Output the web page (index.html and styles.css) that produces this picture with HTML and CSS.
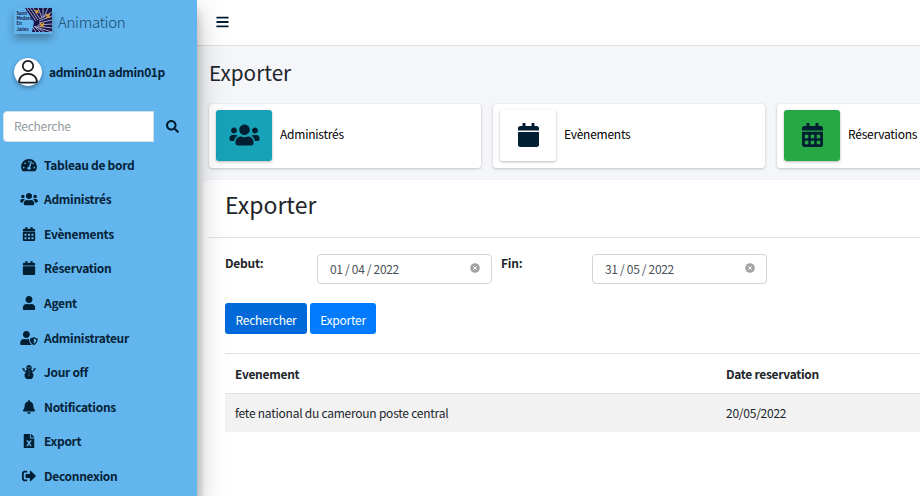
FILE: index.html
```html
<!DOCTYPE html>
<html lang="fr">
<head>
<meta charset="utf-8">
<title>Animation</title>
<link rel="stylesheet" href="styles.css">
</head>
<body>
<svg class="sprite" aria-hidden="true">
  <symbol id="bars" viewBox="0 0 448 512"><path d="M16 132h416c8.800 0 16-7.200 16-16V76c0-8.800-7.200-16-16-16H16C7.200 60 0 67.200 0 76v40c0 8.800 7.200 16 16 16zm0 160h416c8.800 0 16-7.200 16-16v-40c0-8.800-7.200-16-16-16H16c-8.800 0-16 7.200-16 16v40c0 8.800 7.200 16 16 16zm0 160h416c8.800 0 16-7.200 16-16v-40c0-8.800-7.200-16-16-16H16c-8.800 0-16 7.200-16 16v40c0 8.800 7.200 16 16 16z"/></symbol>
  <symbol id="search" viewBox="0 0 512 512"><path d="M505 442.700L405.300 343c-4.500-4.500-10.600-7-17-7H372c27.600-35.300 44-79.700 44-128C416 93.100 322.900 0 208 0S0 93.100 0 208s93.100 208 208 208c48.300 0 92.700-16.400 128-44v16.300c0 6.400 2.500 12.500 7 17l99.700 99.700c9.400 9.400 24.600 9.400 33.900 0l28.300-28.300c9.400-9.400 9.400-24.600.1-34zM208 336c-70.700 0-128-57.200-128-128 0-70.700 57.200-128 128-128 70.700 0 128 57.200 128 128 0 70.700-57.200 128-128 128z"/></symbol>
  <symbol id="tachometer" viewBox="0 0 576 512"><path d="M288 32C128.940 32 0 160.940 0 320c0 52.800 14.250 102.260 39.060 144.800 5.610 9.620 16.300 15.200 27.440 15.200h443c11.140 0 21.830-5.580 27.440-15.200C561.750 422.260 576 372.800 576 320c0-159.060-128.940-288-288-288zm0 64c14.710 0 26.580 10.130 30.320 23.650-1.110 2.260-2.640 4.230-3.450 6.670l-9.220 27.670c-5.130 3.490-10.970 6.010-17.640 6.010-17.670 0-32-14.330-32-32S270.330 96 288 96zM96 384c-17.670 0-32-14.330-32-32s14.330-32 32-32 32 14.330 32 32-14.330 32-32 32zm48-160c-17.670 0-32-14.330-32-32s14.330-32 32-32 32 14.330 32 32-14.330 32-32 32zm246.770-72.410l-61.330 184C343.130 347.330 352 364.540 352 384c0 11.720-3.380 22.550-8.880 32H232.880c-5.500-9.450-8.880-20.280-8.880-32 0-33.940 26.500-61.430 59.900-63.590l61.340-184.010c4.170-12.560 17.730-19.450 30.360-15.170 12.570 4.190 19.350 17.790 15.170 30.360zm14.660 57.200l15.520-46.550c3.470-1.290 7.130-2.230 11.050-2.230 17.670 0 32 14.330 32 32s-14.330 32-32 32c-11.380-.01-20.890-6.280-26.570-15.220zM480 384c-17.670 0-32-14.330-32-32s14.330-32 32-32 32 14.330 32 32-14.330 32-32 32z"/></symbol>
  <symbol id="users" viewBox="0 0 640 512"><path d="M96 224c35.300 0 64-28.700 64-64s-28.700-64-64-64-64 28.700-64 64 28.700 64 64 64zm448 0c35.300 0 64-28.700 64-64s-28.700-64-64-64-64 28.700-64 64 28.700 64 64 64zm32 32h-64c-17.600 0-33.500 7.100-45.100 18.600 40.300 22.100 68.900 62 75.100 109.400h66c17.700 0 32-14.300 32-32v-32c0-35.300-28.700-64-64-64zm-256 0c61.900 0 112-50.100 112-112S381.900 32 320 32 208 82.100 208 144s50.100 112 112 112zm76.800 32h-8.300c-20.800 10-43.900 16-68.500 16s-47.600-6-68.500-16h-8.300C179.600 288 128 339.600 128 403.200V432c0 26.500 21.500 48 48 48h288c26.500 0 48-21.500 48-48v-28.800c0-63.600-51.600-115.200-115.200-115.200zm-223.700-13.400C161.500 263.100 145.600 256 128 256H64c-35.300 0-64 28.700-64 64v32c0 17.700 14.300 32 32 32h65.900c6.300-47.400 34.900-87.300 75.200-109.400z"/></symbol>
  <symbol id="calendar" viewBox="0 0 448 512"><path d="M12 192h424c6.600 0 12 5.400 12 12v260c0 26.500-21.500 48-48 48H48c-26.500 0-48-21.500-48-48V204c0-6.600 5.400-12 12-12zm436-44v-36c0-26.500-21.500-48-48-48h-48V12c0-6.600-5.400-12-12-12h-40c-6.600 0-12 5.400-12 12v52H160V12c0-6.600-5.400-12-12-12h-40c-6.600 0-12 5.400-12 12v52H48C21.500 64 0 85.500 0 112v36c0 6.600 5.400 12 12 12h424c6.600 0 12-5.400 12-12z"/></symbol>
  <symbol id="calendar-alt" viewBox="0 0 448 512"><path fill-rule="evenodd" d="M0 184h448v280c0 26.500-21.500 48-48 48H48c-26.500 0-48-21.500-48-48zM60 250v74h74v-74zM187 250v74h74v-74zM314 250v74h74v-74zM60 378v74h74v-74zM187 378v74h74v-74zM314 378v74h74v-74zM448 148v-36c0-26.500-21.500-48-48-48h-48V12c0-6.600-5.400-12-12-12h-40c-6.600 0-12 5.400-12 12v52H160V12c0-6.600-5.400-12-12-12h-40c-6.600 0-12 5.400-12 12v52H48C21.500 64 0 85.500 0 112v36c0 6.600 5.400 12 12 12h424c6.600 0 12-5.400 12-12z"/></symbol>
  <symbol id="user" viewBox="0 0 448 512"><path d="M224 256c70.700 0 128-57.300 128-128S294.700 0 224 0 96 57.300 96 128s57.300 128 128 128zm89.600 32h-16.700c-22.200 10.200-46.900 16-72.900 16s-50.600-5.800-72.900-16h-16.700C60.200 288 0 348.200 0 422.400V464c0 26.500 21.500 48 48 48h352c26.500 0 48-21.500 48-48v-41.600c0-74.200-60.200-134.400-134.400-134.400z"/></symbol>
  <symbol id="user-shield" viewBox="0 0 640 512"><path d="M622.300 271.100l-115.200-45c-4.100-1.600-12.600-3.700-22.200 0l-115.200 45c-10.700 4.200-17.700 14-17.700 24.900 0 111.600 68.700 188.800 132.900 213.900 9.600 3.700 18 1.600 22.200 0C558.400 489.900 640 420.500 640 296c0-10.900-7-20.700-17.700-24.900zM496 462.400V273.300l95.500 37.300c-5.600 87.100-60.900 135.400-95.500 151.800zM224 256c70.700 0 128-57.300 128-128S294.700 0 224 0 96 57.300 96 128s57.300 128 128 128zm96 40c0-2.500.8-4.800 1.100-7.200-2.500-.1-4.900-.8-7.500-.8h-16.700c-22.200 10.200-46.900 16-72.900 16s-50.600-5.800-72.900-16h-16.700C60.200 288 0 348.200 0 422.400V464c0 26.500 21.500 48 48 48h352c6.800 0 13.300-1.500 19.200-4-54-42.900-99.200-116.700-99.200-212z"/></symbol>
  <symbol id="snowman" viewBox="0 0 512 512"><path fill-rule="evenodd" d="M256 0c-57 0-102 44-102 98 0 25 9 47 24 63-18 17-30 38-34 62l-50-28V136c0-9-7-16-16-16H64c-9 0-14 5-14 14l-32-18c-7-4-14-1-17 6l-1 12c-2 7 2 13 8 16l38 20v29c0 9 4 16 12 20l88 48c-34 29-54 68-54 110 0 48 22 91 62 122 12 9 24 13 38 13h128c14 0 26-4 38-13 40-31 62-74 62-122 0-42-20-81-54-110l88-48c8-4 12-11 12-20v-29l38-20c6-3 10-9 8-16l-1-12c-3-7-10-10-17-6l-32 18c0-9-5-14-14-14h-14c-9 0-16 7-16 16v59l-50 28c-4-24-16-45-34-62 15-16 24-38 24-63 0-54-45-98-102-98zM215 64a18 18 0 1 0 .1 0zM297 64a18 18 0 1 0 .1 0zM240 112h32l-16 48zM256 208a18 18 0 1 0 .1 0zM256 288a18 18 0 1 0 .1 0zM256 368a18 18 0 1 0 .1 0z"/></symbol>
  <symbol id="bell" viewBox="0 0 448 512"><path d="M224 512c35.320 0 63.970-28.650 63.970-64H160.030c0 35.350 28.650 64 63.970 64zm215.390-149.710c-19.320-20.760-55.470-51.990-55.470-154.290 0-77.700-54.480-139.900-127.940-155.160V32c0-17.670-14.320-32-31.980-32s-31.980 14.330-31.980 32v20.840C118.560 68.100 64.080 130.300 64.080 208c0 102.300-36.150 133.530-55.470 154.290-6 6.450-8.660 14.160-8.610 21.710.11 16.400 12.980 32 32.100 32h383.800c19.120 0 32-15.600 32.100-32 .05-7.550-2.610-15.270-8.610-21.710z"/></symbol>
  <symbol id="file-excel" viewBox="0 0 384 512"><path d="M224 136V0H24C10.700 0 0 10.700 0 24v464c0 13.300 10.700 24 24 24h336c13.300 0 24-10.700 24-24V160H248c-13.200 0-24-10.800-24-24zm60.100 106.500L224 336l60.100 93.500c5.100 8-.6 18.500-10.100 18.500h-34.900c-4.400 0-8.500-2.400-10.600-6.300C208.900 405.500 192 373 192 373c-6.400 14.800-10 20-36.600 68.800-2.100 3.900-6.100 6.300-10.500 6.300H110c-9.500 0-15.200-10.500-10.100-18.500l60.300-93.500-60.300-93.500c-5.200-8 .6-18.500 10.100-18.500h34.800c4.400 0 8.500 2.400 10.600 6.300 26.100 48.800 20 33.600 36.600 68.500 0 0 6.100-11.700 36.600-68.500 2.100-3.900 6.200-6.300 10.600-6.300H274c9.500-.1 15.200 10.400 10.100 18.400zM384 121.900v6.100H256V0h6.100c6.400 0 12.500 2.500 17 7l97.900 98c4.500 4.500 7 10.600 7 16.900z"/></symbol>
  <symbol id="sign-out" viewBox="0 0 512 512"><path d="M497 273L329 441c-15 15-41 4.500-41-17v-96H152c-13.300 0-24-10.700-24-24v-96c0-13.300 10.700-24 24-24h136V88c0-21.400 25.900-32 41-17l168 168c9.300 9.400 9.300 24.600 0 34zM192 436v-40c0-6.600-5.400-12-12-12H96c-17.700 0-32-14.300-32-32V160c0-17.700 14.300-32 32-32h84c6.600 0 12-5.400 12-12V76c0-6.600-5.400-12-12-12H96c-53 0-96 43-96 96v192c0 53 43 96 96 96h84c6.600 0 12-5.400 12-12z"/></symbol>
  <symbol id="clear" viewBox="0 0 10 10"><circle cx="5" cy="5" r="4.800" fill="#a3a3a3"/><path d="M3.300 3.300l3.400 3.400M6.700 3.300l-3.400 3.400" stroke="#fff" stroke-width="1"/></symbol>
</svg>
<div class="app">
  <aside class="sidebar">
    <a class="brand">
      <svg class="logo" viewBox="0 0 38 26">
        <defs><clipPath id="art"><path d="M11 0H38V24H18L20 14z"/></clipPath></defs>
        <g clip-path="url(#art)">
          <rect x="10" width="28" height="26" fill="#17164a"/>
          <g fill="none" stroke="#b9b5d6" stroke-width=".9">
            <path d="M13 0L22 13M16 0L24 12M19 0L26 11M38 4L26 11M38 8L25 13M38 12L25 15M38 16L24 17M38 20L23 18M38 24L22 19M33 26L21 18M28 26L20 18M23 26L19 19M24 0L28 10M29 0L29 10M34 0L30 9"/>
          </g>
          <path d="M32 6l4 4M36 6l-4 4M26 15l4 4M30 15l-4 4M21.500 2l3 3M24.500 2l-3 3" stroke="#e2a32c" stroke-width="1.200"/>
        </g>
        <g class="logo-text"><text x="2.500" y="7">Saint</text><text x="2.500" y="12.200">Medard</text><text x="2.500" y="17.400">En</text><text x="2.500" y="22.600">Jalles</text></g>
      </svg>
      <span class="brand-name">Animation</span>
    </a>
    <div class="user-panel">
      <svg class="avatar" viewBox="0 0 28 28"><circle cx="14" cy="14" r="14" fill="#fff"/><g fill="none" stroke="#15181b" stroke-width="1.700"><circle cx="14" cy="8" r="5.200"/><path d="M4.900 24.700C4.900 19 9 15.900 14 15.900S23.100 19 23.100 24.700z" stroke-linejoin="round"/></g></svg>
      <span>admin01n admin01p</span>
    </div>
    <div class="search"><div class="search-field">Recherche</div><svg class="search-icon"><use href="#search"/></svg></div>
    <nav class="menu">
      <a><svg><use href="#tachometer"/></svg><span>Tableau de bord</span></a>
      <a><svg><use href="#users"/></svg><span>Administrés</span></a>
      <a><svg><use href="#calendar-alt"/></svg><span>Evènements</span></a>
      <a><svg><use href="#calendar"/></svg><span>Réservation</span></a>
      <a><svg><use href="#user"/></svg><span>Agent</span></a>
      <a><svg><use href="#user-shield"/></svg><span>Administrateur</span></a>
      <a><svg><use href="#snowman"/></svg><span>Jour off</span></a>
      <a><svg><use href="#bell"/></svg><span>Notifications</span></a>
      <a><svg><use href="#file-excel"/></svg><span>Export</span></a>
      <a><svg><use href="#sign-out"/></svg><span>Deconnexion</span></a>
    </nav>
  </aside>
  <main class="content">
    <header class="topbar"><svg><use href="#bars"/></svg></header>
    <h1>Exporter</h1>
    <section class="cards">
      <div class="info-box"><span class="tile teal"><svg><use href="#users"/></svg></span><span>Administrés</span></div>
      <div class="info-box"><span class="tile"><svg><use href="#calendar"/></svg></span><span>Evènements</span></div>
      <div class="info-box"><span class="tile green"><svg><use href="#calendar-alt"/></svg></span><span>Réservations</span></div>
    </section>
    <section class="panel">
      <h2>Exporter</h2>
      <div class="panel-body">
        <div class="filters">
          <label>Debut:</label><div class="date"><span>01 / 04 / 2022</span><svg><use href="#clear"/></svg></div>
          <label>Fin:</label><div class="date"><span>31 / 05 / 2022</span><svg><use href="#clear"/></svg></div>
        </div>
        <div class="actions"><button class="active">Rechercher</button><button>Exporter</button></div>
        <div class="table">
          <div class="row head"><span>Evenement</span><span>Date reservation</span></div>
          <div class="row"><span>fete national du cameroun poste central</span><span>20/05/2022</span></div>
        </div>
      </div>
    </section>
  </main>
</div>
</body>
</html>
```
FILE: styles.css
```css
* { box-sizing: border-box; }
body { margin: 0; overflow: hidden; color: #212529; font: 12px/18px "Noto Sans CJK SC", "Open Sans", sans-serif; letter-spacing: -.24px; }
svg { display: block; fill: #001f33; }
.sprite { display: none; }
.app { display: flex; width: 920px; height: 496px; overflow: hidden; background: #f4f6f9; }
.sidebar { flex: 0 0 197px; height: 496px; z-index: 2; background: #62b5ed; color: #062338; box-shadow: 0 14px 28px rgba(0,0,0,.25), 0 10px 10px rgba(0,0,0,.22); }
.brand { display: flex; align-items: center; gap: 6px; height: 45px; padding: 0 0 3px 14px; }
.logo { width: 38px; height: 26px; box-shadow: 0 5px 8px rgba(0,0,0,.3); }
.logo-text { font: bold 4.200px "Noto Sans CJK SC", sans-serif; letter-spacing: 0; fill: #17164a; }
.brand-name { margin-top: 2px; color: #1c4a6b; font-size: 15px; font-weight: 300; line-height: 22px; letter-spacing: -.3px; }
.user-panel { display: flex; align-items: center; gap: 7px; height: 54px; padding-left: 14px; font-weight: 700; letter-spacing: -.35px; }
.avatar { width: 28px; height: 28px; border-radius: 50%; box-shadow: 0 2px 4px rgba(0,0,0,.35); }
.search { display: flex; align-items: center; margin: 12px 0 0 3px; height: 31px; }
.search-field { width: 151px; height: 31px; padding: 5px 10px; border: 1px solid #d5dfe6; border-radius: 4px 0 0 4px; background: #fff; color: #939ba2; }
.search-icon { width: 13px; height: 13px; margin-left: 12px; }
.menu { padding: 5.300px 0 0 20px; }
.menu a { display: flex; align-items: center; gap: 6px; height: 34.600px; font-weight: 700; letter-spacing: -.3px; }
.menu svg { width: 18px; height: 14px; }
.content { flex: 1; min-width: 0; overflow: hidden; }
.topbar { display: flex; align-items: center; height: 46px; padding: 0 0 1px 19px; background: #fff; border-bottom: 1px solid #dee2e6; }
.topbar svg { width: 13px; height: 14px; }
h1, h2 { margin: 0; font-weight: 400; letter-spacing: 0; }
h1 { padding: 11px 0 0 12px; height: 58px; font-size: 20.700px; line-height: 30px; }
.cards { display: flex; gap: 12px; padding-left: 12px; height: 76px; }
.info-box { display: flex; flex: 0 0 272px; align-items: center; gap: 8px; height: 64px; padding: 0 7px 2px; background: #fff; border-radius: 3px; color: #000; box-shadow: 0 0 1px rgba(0,0,0,.13), 0 1px 3px rgba(0,0,0,.2); }
.info-box > span:last-child { padding-bottom: 2px; }
.tile { display: flex; align-items: center; justify-content: center; width: 56px; height: 51px; border-radius: 3px; background: #fff; box-shadow: 0 1px 3px rgba(0,0,0,.28); }
.tile svg { width: 31px; height: 24px; }
.teal { background: #17a2b8; }
.green { background: #28a745; }
.panel { height: 330px; margin-left: 6px; background: #fff; border-radius: 4px 0 0; box-shadow: 0 0 1px rgba(0,0,0,.15); }
h2 { height: 58px; margin-left: 6px; padding: 8px 0 0 16px; border-bottom: 1px solid #dee2e6; font-size: 23px; line-height: 33px; }
.panel-body { padding: 16px 0 0 22px; }
.filters { display: flex; }
.filters label { width: 92px; font-weight: 700; }
.date { display: flex; align-items: center; justify-content: space-between; width: 175px; height: 30px; margin-right: 8px; padding: 0 11px 0 12px; border: 1px solid #ced4da; border-radius: 4px; color: #495057; letter-spacing: -.32px; }
.filters label + .date ~ label { padding-left: 1px; }
.date svg { width: 10px; height: 10px; margin-top: -2px; }
.actions { display: flex; gap: 3px; margin-top: 19px; }
button { width: 66px; height: 31px; padding: 2px 0 0; border: 0; border-radius: 3px; background: #007bff; color: #fff; font: inherit; letter-spacing: inherit; }
.active { width: 82px; background: #0069d9; }
.table { margin-top: 19px; }
.row { display: grid; grid-template-columns: 491px 1fr; align-items: center; height: 38px; padding: 0 0 1px 10px; background: #f2f2f2; }
.head { height: 41px; padding: 1px 0 0 10px; border-top: 1px solid #dee2e6; border-bottom: 1px solid #dee2e6; background: #fff; font-weight: 700; letter-spacing: -.3px; }
```
